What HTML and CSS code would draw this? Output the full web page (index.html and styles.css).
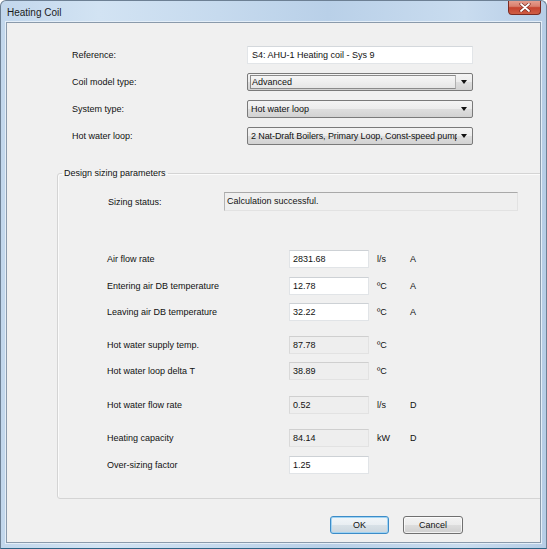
FILE: index.html
```html
<!DOCTYPE html>
<html>
<head>
<meta charset="utf-8">
<title>Heating Coil</title>
<link rel="stylesheet" href="styles.css">
</head>
<body>
<div class="window">
  <div class="titlebar">
    <span class="title">Heating Coil</span>
    <div class="close">
      <svg width="12" height="9" viewBox="0 0 12 9">
        <path d="M2 1 L10 8 M10 1 L2 8" stroke="#7a2a20" stroke-width="3.2" stroke-linecap="round"/>
        <path d="M2 1 L10 8 M10 1 L2 8" stroke="#ffffff" stroke-width="1.8" stroke-linecap="round"/>
      </svg>
    </div>
  </div>
  <div class="client">
    <div class="top-form">
      <div class="frow"><span class="flabel">Reference:</span><div class="textbox">S4: AHU-1 Heating coil - Sys 9</div></div>
      <div class="frow"><span class="flabel">Coil model type:</span><div class="combo"><span class="focus">Advanced</span><span class="arrow"></span></div></div>
      <div class="frow"><span class="flabel">System type:</span><div class="combo"><span class="ctext">Hot water loop</span><span class="arrow"></span></div></div>
      <div class="frow"><span class="flabel">Hot water loop:</span><div class="combo"><span class="ctext tight">2 Nat-Draft Boilers, Primary Loop, Const-speed pump</span><span class="arrow"></span></div></div>
    </div>
    <fieldset class="group">
      <legend>Design sizing parameters</legend>
      <div class="status-row"><span class="slabel">Sizing status:</span><div class="status">Calculation successful.</div></div>
      <div class="params">
        <div class="prow"><span class="plabel">Air flow rate</span><div class="field edit">2831.68</div><span class="unit">l/s</span><span class="code">A</span></div>
        <div class="prow g9"><span class="plabel">Entering air DB temperature</span><div class="field edit">12.78</div><span class="unit">ºC</span><span class="code">A</span></div>
        <div class="prow g8"><span class="plabel">Leaving air DB temperature</span><div class="field edit">32.22</div><span class="unit">ºC</span><span class="code">A</span></div>
        <div class="prow g15"><span class="plabel">Hot water supply temp.</span><div class="field ro">87.78</div><span class="unit">ºC</span><span class="code"></span></div>
        <div class="prow g8"><span class="plabel">Hot water loop delta T</span><div class="field ro">38.89</div><span class="unit">ºC</span><span class="code"></span></div>
        <div class="prow g16"><span class="plabel">Hot water flow rate</span><div class="field ro">0.52</div><span class="unit">l/s</span><span class="code">D</span></div>
        <div class="prow g15"><span class="plabel">Heating capacity</span><div class="field ro">84.14</div><span class="unit">kW</span><span class="code">D</span></div>
        <div class="prow g9"><span class="plabel">Over-sizing factor</span><div class="field edit">1.25</div><span class="unit"></span><span class="code"></span></div>
      </div>
    </fieldset>
    <div class="buttons">
      <div class="btn default">OK</div>
      <div class="btn">Cancel</div>
    </div>
  </div>
</div>
</body>
</html>
```
FILE: styles.css
```css
html, body {
  margin: 0;
  padding: 0;
  background: #ffffff;
}
body {
  font-family: "Liberation Sans", Arial, sans-serif;
  font-size: 9px;
  color: #111111;
}
.window {
  width: 547px;
  height: 549px;
  box-sizing: border-box;
  border: 1px solid #6d8094;
  border-bottom-color: #2f6486;
  border-radius: 6px 6px 0 0;
  background: linear-gradient(to right, #c2d7ec 0%, #d2e3f3 18%, #c6daee 40%, #b9d0e8 60%, #c9dcef 85%, #b6cde6 100%);
  padding: 0 5px 5px 5px;
  display: flex;
  flex-direction: column;
  overflow: hidden;
}
.titlebar {
  height: 21px;
  flex: none;
  display: flex;
  justify-content: space-between;
  align-items: flex-start;
}
.title {
  font-size: 10px;
  color: #1b1b1b;
  margin-left: 1px;
  margin-top: 6px;
  line-height: 12px;
}
.close {
  width: 33px;
  height: 15px;
  box-sizing: border-box;
  margin-top: -1px;
  border: 1px solid #7b2b22;
  border-top: none;
  border-radius: 0 0 4px 4px;
  background: linear-gradient(to bottom, #e7a394 0%, #d9806e 45%, #c5432f 55%, #cf5e44 100%);
  display: flex;
  align-items: center;
  justify-content: center;
}
.close svg {
  display: block;
}
.client {
  flex: 1;
  border: 1px solid #8a9aab;
  background: #f0f0f0;
  overflow: hidden;
  display: flex;
  flex-direction: column;
  box-shadow: 0 0 0 1px #e4eef8;
}
.top-form {
  padding: 23px 0 0 65px;
  display: flex;
  flex-direction: column;
  gap: 9px;
}
.frow {
  display: flex;
  align-items: center;
  height: 18px;
}
.flabel {
  width: 175px;
  flex: none;
}
.textbox {
  width: 226px;
  height: 18px;
  box-sizing: border-box;
  background: #ffffff;
  border: 1px solid #e2e5e8;
  border-top-color: #d4d8dc;
  padding-left: 4px;
  line-height: 16px;
  white-space: nowrap;
  overflow: hidden;
}
.combo {
  width: 226px;
  height: 18px;
  box-sizing: border-box;
  border: 1px solid #7a7a7a;
  border-radius: 2px;
  background: linear-gradient(to bottom, #f4f4f4 0%, #ececec 50%, #dedede 51%, #d2d2d2 100%);
  display: flex;
  align-items: center;
  padding-left: 2px;
  overflow: hidden;
}
.ctext {
  flex: 1;
  min-width: 0;
  white-space: nowrap;
  overflow: hidden;
  line-height: 14px;
  padding-left: 1px;
}
.ctext.tight {
  letter-spacing: -0.1px;
}
.focus {
  width: 206px;
  height: 14px;
  box-sizing: border-box;
  border: 1px solid #8a8a8a;
  border-right-color: #b0b0b0;
  background: linear-gradient(to bottom, #f6f6f6, #e6e6e6);
  line-height: 12px;
  padding-left: 1px;
  flex: none;
}
.arrow {
  width: 0;
  height: 0;
  border-left: 3px solid transparent;
  border-right: 3px solid transparent;
  border-top: 4px solid #111;
  margin-left: auto;
  margin-right: 5px;
  flex: none;
}
.ctext + .arrow {
  margin-left: 4px;
}
.group {
  margin: 22px -3px 0 50px;
  padding: 0 0 24px 0;
  border: 1px solid #d4d4d4;
  border-radius: 3px;
  box-shadow: inset 1px 1px 0 #fbfbfb;
  min-width: 0;
}
.group legend {
  margin-left: 4px;
  padding: 0 2px;
  line-height: 12px;
}
.status-row {
  display: flex;
  align-items: center;
  margin-top: 13px;
  padding-left: 50px;
}
.slabel {
  width: 116px;
  flex: none;
}
.status {
  width: 294px;
  height: 19px;
  box-sizing: border-box;
  border: 1px solid #e2e2e2;
  border-top-color: #a9a9a9;
  border-left-color: #b4b4b4;
  background: #efefef;
  padding-left: 2px;
  line-height: 17px;
}
.params {
  margin-top: 39px;
  padding-left: 49px;
  display: flex;
  flex-direction: column;
}
.prow {
  display: flex;
  align-items: center;
  height: 18px;
}
.g8 { margin-top: 8px; }
.g9 { margin-top: 9px; }
.g15 { margin-top: 15px; }
.g16 { margin-top: 16px; }
.plabel {
  width: 182px;
  flex: none;
}
.field {
  width: 80px;
  height: 18px;
  box-sizing: border-box;
  padding-left: 3px;
  line-height: 16px;
  flex: none;
}
.field.edit {
  background: #ffffff;
  border: 1px solid #e1e4e7;
  border-top-color: #cdd1d5;
}
.field.ro {
  background: #eeeeee;
  border: 1px solid #e2e2e2;
  border-top-color: #cfcfcf;
  border-left-color: #d9d9d9;
}
.unit {
  width: 33px;
  margin-left: 8px;
  flex: none;
}
.code {
  width: 20px;
  flex: none;
}
.buttons {
  display: flex;
  justify-content: flex-end;
  gap: 14px;
  margin-top: 17px;
  padding-right: 77px;
}
.btn {
  width: 60px;
  height: 18px;
  box-sizing: border-box;
  border: 1px solid #707070;
  border-radius: 3px;
  background: linear-gradient(to bottom, #f3f3f3 0%, #ebebeb 50%, #dddddd 51%, #cfcfcf 100%);
  text-align: center;
  line-height: 16px;
  box-shadow: inset 0 0 0 1px rgba(255,255,255,0.7);
}
.btn.default {
  width: 59px;
  border-color: #3c8cc8;
  background: linear-gradient(to bottom, #f1f6f9 0%, #e8eef2 50%, #d8e1e7 51%, #cbd6de 100%);
  box-shadow: inset 0 0 0 1px #9fd3f3;
}
```
